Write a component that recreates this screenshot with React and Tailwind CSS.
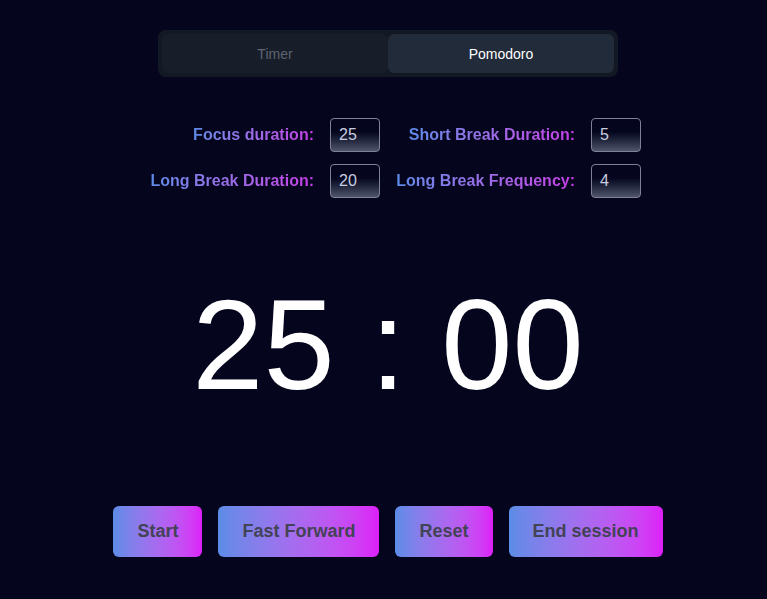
import { useState } from 'react'

const settings = [
  { left: 'Focus duration:', leftVal: 25, right: 'Short Break Duration:', rightVal: 5 },
  { left: 'Long Break Duration:', leftVal: 20, right: 'Long Break Frequency:', rightVal: 4 },
]

function Label({ children }) {
  return (
    <span className="justify-self-end whitespace-nowrap bg-gradient-to-r from-[#5c8ae8] to-[#c63ae6] bg-clip-text text-base font-bold text-transparent">
      {children}
    </span>
  )
}

function NumberBox({ value }) {
  return (
    <div className="flex h-[34px] w-[50px] items-center rounded border border-[#7d8296] bg-gradient-to-b from-[#05061d] from-40% to-[#50556a] px-2 text-base text-[#c9cde0]">
      {value}
    </div>
  )
}

export default function App() {
  const [mode, setMode] = useState('pomodoro')
  const buttons = ['Start', 'Fast Forward', 'Reset', 'End session']

  return (
    <div className="min-h-[599px] bg-[#05061d] pl-[9px] pt-[30px] font-['Liberation_Sans',Arial,sans-serif]">
      {/* Mode switch */}
      <div className="mx-auto flex w-[460px] rounded-lg bg-[#121824] p-1">
        <button
          type="button"
          onClick={() => setMode('timer')}
          className={`h-[39px] flex-1 rounded-md text-sm ${mode === 'timer' ? 'bg-[#222b39] text-white' : 'bg-[#171d29] text-[#5d6472]'}`}
        >
          Timer
        </button>
        <button
          type="button"
          onClick={() => setMode('pomodoro')}
          className={`h-[39px] flex-1 rounded-md text-sm ${mode === 'pomodoro' ? 'bg-[#222b39] text-white' : 'bg-[#171d29] text-[#5d6472]'}`}
        >
          Pomodoro
        </button>
      </div>

      {/* Settings */}
      <div className="ml-[141px] mt-[41px] grid w-[493px] grid-cols-[164px_50px_179px_50px] items-center gap-x-4 gap-y-3">
        {settings.map((row) => (
          <div key={row.left} className="contents">
            <Label>{row.left}</Label>
            <NumberBox value={row.leftVal} />
            <Label>{row.right}</Label>
            <NumberBox value={row.rightVal} />
          </div>
        ))}
      </div>

      {/* Clock */}
      <div className="mt-[83px] text-center text-[128px] leading-[128px] text-white">25 : 00</div>

      {/* Controls */}
      <div className="mt-[97px] flex justify-center gap-4">
        {buttons.map((b) => (
          <button
            key={b}
            type="button"
            className="rounded-md bg-gradient-to-r from-[#5b8ce7] to-[#dc1ef7] px-6 py-3 text-lg font-bold leading-[27px] text-[#434356]"
          >
            {b}
          </button>
        ))}
      </div>
    </div>
  )
}
